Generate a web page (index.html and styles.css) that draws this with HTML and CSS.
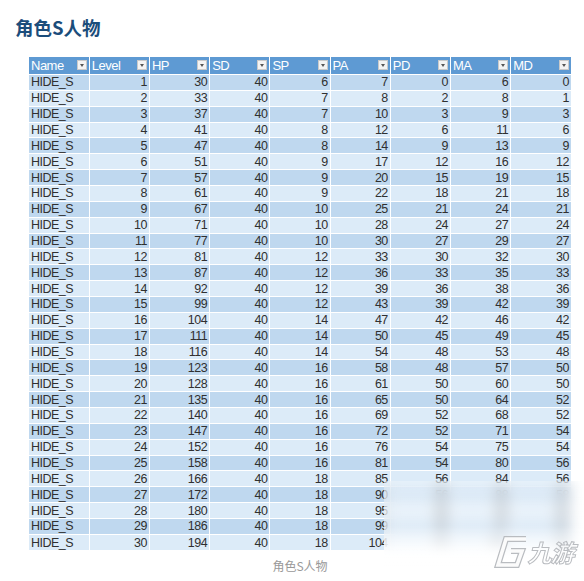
FILE: index.html
```html
<!DOCTYPE html>
<html lang="zh">
<head>
<meta charset="utf-8">
<title>角色S人物</title>
<link rel="stylesheet" href="styles.css">
</head>
<body>
<div class="page">
  <h1 class="title">角色S人物</h1>
  <div class="figure">
    <table class="sheet">
      <thead>
        <tr>
          <th><span class="lbl">Name</span><span class="dd"></span></th>
          <th><span class="lbl">Level</span><span class="dd"></span></th>
          <th><span class="lbl">HP</span><span class="dd"></span></th>
          <th><span class="lbl">SD</span><span class="dd"></span></th>
          <th><span class="lbl">SP</span><span class="dd"></span></th>
          <th><span class="lbl">PA</span><span class="dd"></span></th>
          <th><span class="lbl">PD</span><span class="dd"></span></th>
          <th><span class="lbl">MA</span><span class="dd"></span></th>
          <th><span class="lbl">MD</span><span class="dd"></span></th>
        </tr>
      </thead>
      <tbody id="rows"></tbody>
    </table>
    <p class="caption">角色S人物</p>
  </div>
  <div class="watermark">
    <div class="logo">
      <svg class="logo-icon" width="34" height="34" viewBox="0 0 34 34">
        <path d="M32 4 L12 4 L4 30 L23 30 L28 16 L17 16" fill="none" stroke="#b9bcc0" stroke-width="6" stroke-linejoin="miter"/>
        <path d="M32 4 L12 4 L4 30 L23 30 L28 16 L17 16" fill="none" stroke="#fbfbfb" stroke-width="3.6" stroke-linejoin="miter"/>
      </svg>
      <span class="logo-text">九游</span>
    </div>
  </div>
</div>
<script src="app.js"></script>
</body>
</html>
```

FILE: app.js
```js
var data = [
  [1,30,40,6,7,0,6,0],
  [2,33,40,7,8,2,8,1],
  [3,37,40,7,10,3,9,3],
  [4,41,40,8,12,6,11,6],
  [5,47,40,8,14,9,13,9],
  [6,51,40,9,17,12,16,12],
  [7,57,40,9,20,15,19,15],
  [8,61,40,9,22,18,21,18],
  [9,67,40,10,25,21,24,21],
  [10,71,40,10,28,24,27,24],
  [11,77,40,10,30,27,29,27],
  [12,81,40,12,33,30,32,30],
  [13,87,40,12,36,33,35,33],
  [14,92,40,12,39,36,38,36],
  [15,99,40,12,43,39,42,39],
  [16,104,40,14,47,42,46,42],
  [17,111,40,14,50,45,49,45],
  [18,116,40,14,54,48,53,48],
  [19,123,40,16,58,48,57,50],
  [20,128,40,16,61,50,60,50],
  [21,135,40,16,65,50,64,52],
  [22,140,40,16,69,52,68,52],
  [23,147,40,16,72,52,71,54],
  [24,152,40,16,76,54,75,54],
  [25,158,40,16,81,54,80,56],
  [26,166,40,18,85,56,84,56],
  [27,172,40,18,90,56,88,58],
  [28,180,40,18,95,58,93,58],
  [29,186,40,18,99,58,97,60],
  [30,194,40,18,104,60,102,60]
];
var tb = document.getElementById('rows');
var html = '';
for (var i = 0; i < data.length; i++) {
  html += '<tr><td class="name">HIDE_S</td>';
  for (var j = 0; j < data[i].length; j++) {
    html += '<td class="num">' + data[i][j] + '</td>';
  }
  html += '</tr>';
}
tb.innerHTML = html;
```

FILE: styles.css
```css
html, body {
  margin: 0;
  padding: 0;
  background: #ffffff;
}
.page {
  position: relative;
  width: 584px;
  height: 581px;
  overflow: hidden;
  font-family: "Liberation Sans", "Noto Sans CJK SC", sans-serif;
}
.title {
  margin: 0;
  padding: 15px 0 0 15px;
  height: 24px;
  line-height: 24px;
  font-size: 18.5px;
  font-weight: bold;
  color: #1b4d7b;
  font-family: "Noto Sans CJK SC", sans-serif;
}
.figure {
  margin: 18px 0 0 29px;
  width: 542px;
}
.sheet {
  width: 542px;
  table-layout: fixed;
  border-collapse: collapse;
  font-family: "Liberation Sans", sans-serif;
  font-size: 12.5px;
  letter-spacing: -0.5px;
  color: #303030;
}
.sheet th {
  height: 17px;
  padding: 0 0 0 2px;
  background: #5e9ad3;
  color: #ffffff;
  font-weight: normal;
  font-size: 13px;
  text-align: left;
  border-left: 1px solid #ffffff;
  position: relative;
  line-height: 17px;
  box-sizing: border-box;
}
.sheet th:first-child,
.sheet td:first-child {
  border-left: none;
}
.lbl {
  display: inline-block;
}
.dd {
  position: absolute;
  right: 2px;
  top: 3px;
  width: 10px;
  height: 10px;
  background: #f3f3f3;
  border: 1px solid #c9c9c9;
  box-sizing: border-box;
}
.dd::after {
  content: "";
  position: absolute;
  left: 2px;
  top: 3px;
  border-left: 2.5px solid transparent;
  border-right: 2.5px solid transparent;
  border-top: 3px solid #555;
}
.sheet td {
  height: 15.87px;
  padding: 0 2px;
  line-height: 14px;
  border-left: 1px solid #ffffff;
  border-top: 1px solid #ffffff;
  box-sizing: border-box;
  white-space: nowrap;
  overflow: hidden;
}
.sheet tbody tr:nth-child(odd) td {
  background: #bfd8ef;
}
.sheet tbody tr:nth-child(even) td {
  background: #dcebf8;
}
.sheet td.num {
  text-align: right;
}
.sheet td.name {
  text-align: left;
}
.caption {
  margin: 8px 0 0 0;
  text-align: center;
  font-size: 12px;
  line-height: 16px;
  color: #999999;
  font-family: "Noto Sans CJK SC", sans-serif;
}
.watermark {
  position: absolute;
  left: 384px;
  top: 481px;
  right: 0;
  bottom: 0;
  backdrop-filter: blur(7px);
  -webkit-backdrop-filter: blur(7px);
  background: linear-gradient(to bottom, rgba(255,255,255,0.35) 0%, rgba(255,255,255,0.45) 45%, rgba(255,255,255,0.85) 72%, #ffffff 88%);
}
.logo {
  position: absolute;
  left: 110px;
  top: 53px;
  display: flex;
  align-items: center;
  gap: 2px;
}
.logo-text {
  font-family: "Noto Sans CJK SC", sans-serif;
  font-size: 24px;
  font-weight: bold;
  color: transparent;
  -webkit-text-stroke: 1px #b9bcc0;
  transform: skewX(-14deg);
  display: inline-block;
  letter-spacing: -1px;
}
```
